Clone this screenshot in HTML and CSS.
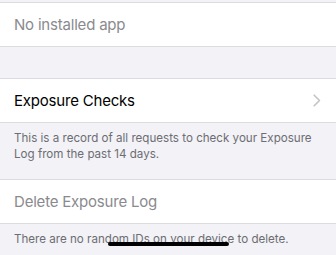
FILE: index.html
```html
<!DOCTYPE html>
<html>
	<head>
		<meta charset="utf-8">
		<title>Exposure Logging</title>
		<link rel="stylesheet" href="styles.css">
	</head>
	<body class="settings">
		<div class="group first">
			<div class="cell disabled">No installed app</div>
		</div>
		<div class="group spaced">
			<div class="cell link">
				<span>Exposure Checks</span>
				<svg class="chevron" width="8" height="13" viewBox="0 0 8 13">
					<path d="M1.2 1.2 L6.5 6.5 L1.2 11.8" fill="none" stroke="#c4c4c7" stroke-width="1.6" stroke-linecap="round" stroke-linejoin="round"/>
				</svg>
			</div>
		</div>
		<p class="footer">This is a record of all requests to check your Exposure Log from the past 14 days.</p>
		<div class="group">
			<div class="cell disabled">Delete Exposure Log</div>
		</div>
		<p class="footer">There are no random IDs on your device to delete.</p>
		<div class="home-indicator"></div>
	</body>
</html>
```

FILE: styles.css
```css
html, body
{
	margin:0px;
	padding:0px;
}
body
{
	background-color:#f2f2f7;
	font-family:Inter, "Liberation Sans", sans-serif;
	width:336px;
	height:255px;
	overflow:hidden;
	position:relative;
}
.group
{
	background-color:#ffffff;
	border-top:1px solid #dcdce0;
	border-bottom:1px solid #dcdce0;
}
.group.first
{
	margin-top:2px;
}
.group.spaced
{
	margin-top:31px;
}
.cell
{
	height:43px;
	padding-left:14px;
	padding-right:15px;
	display:flex;
	align-items:center;
	justify-content:space-between;
	font-size:15px;
	letter-spacing:-0.2px;
	color:#000000;
}
.cell.disabled
{
	color:#8a8a8e;
}
.footer
{
	margin:0px;
	padding:7px 14px 17px 14px;
	font-size:11.6px;
	line-height:16px;
	color:#6d6d72;
}
.home-indicator
{
	position:absolute;
	left:108px;
	top:242px;
	width:121px;
	height:4px;
	border-radius:2px;
	background-color:#000000;
}
```
